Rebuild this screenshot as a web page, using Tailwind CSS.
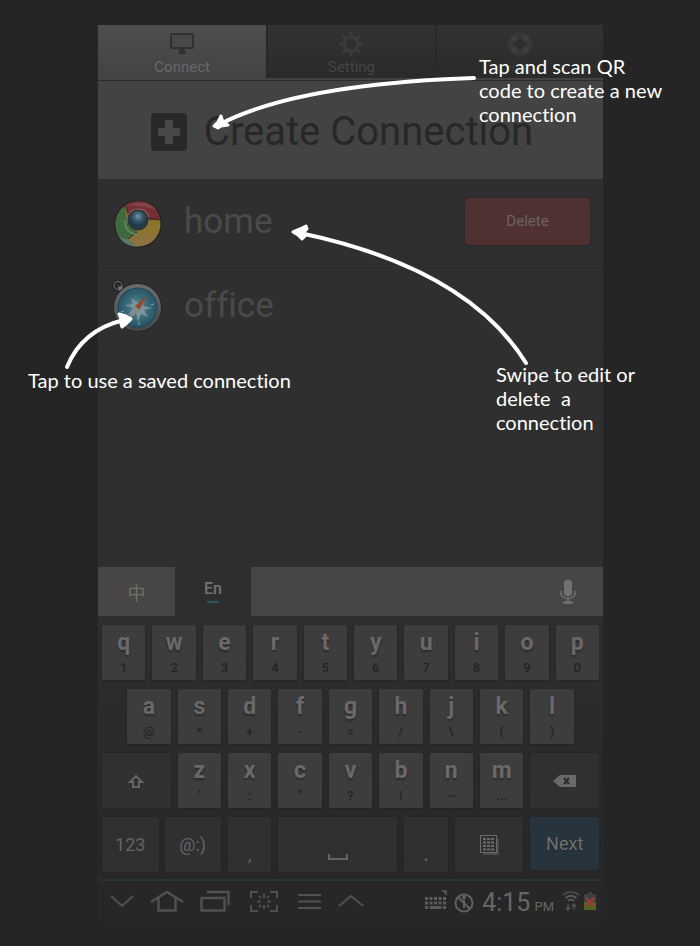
<!DOCTYPE html>
<html lang="en">
<head>
<meta charset="utf-8">
<meta name="viewport" content="width=device-width, initial-scale=1">
<title>Connections</title>
<script src="https://cdn.jsdelivr.net/npm/@tailwindcss/browser@4"></script>
</head>
<body class="relative min-h-screen bg-[#252525] font-['Roboto','Noto_Sans_CJK_SC',sans-serif] [font-variant-ligatures:none]">
<main class="pl-[98px] pr-[97px] pt-[25px]">
  <nav class="grid grid-cols-3 border-b-2 border-[#424242] text-[15px] leading-4" aria-label="Main">
    <a href="#connect" class="flex h-[53px] flex-col items-center gap-[3px] bg-linear-to-b from-[#4e4e4e] to-[#434343] pt-[7px] text-[#686868]">
      <svg class="h-6 w-6" viewBox="0 0 24 24" aria-hidden="true"><rect x="1" y="2" width="22" height="14" rx="1" fill="#484848" stroke="#303030" stroke-width="2"/><path d="M10 17h4l2 5H8z" fill="#303030"/></svg>
      Connect
    </a>
    <a href="#setting" class="flex h-[53px] flex-col items-center gap-[3px] border-l-2 border-[#282828] bg-linear-to-b from-[#323232] to-[#2a2a2a] pt-[7px] text-[#444444]">
      <svg class="h-6 w-6" viewBox="0 0 24 24" fill="none" stroke="#3b3b3b" aria-hidden="true"><circle cx="12" cy="12" r="7" stroke-width="3.500"/><path d="M12 0v4M12 20v4M0 12h4M20 12h4M3.500 3.500l3 3M17.500 17.500l3 3M3.500 20.500l3-3M17.500 6.500l3-3" stroke-width="3.500"/></svg>
      Setting
    </a>
    <a href="#help" class="flex h-[53px] flex-col items-center gap-[3px] border-l-2 border-[#2b2b2b] bg-linear-to-b from-[#323232] to-[#2a2a2a] pt-[7px] text-[#383838]">
      <svg class="h-6 w-6" viewBox="0 0 24 24" fill="none" aria-hidden="true"><circle cx="12" cy="12" r="9" stroke="#373737" stroke-width="6"/><path d="M4.500 4.500l4 4M15.500 15.500l4 4M4.500 19.500l4-4M15.500 8.500l4-4" stroke="#3e3e3e" stroke-width="5"/></svg>
      Help
    </a>
  </nav>

  <button type="button" class="flex h-[99px] w-full items-center justify-center gap-[17px] border-t border-[#2b2b2b] bg-[#434343] pl-[9px] pr-[26px] pt-1 text-[40px] leading-none text-[#272727]">
    <svg class="h-[38px] w-9 shrink-0" viewBox="0 0 36 38" aria-hidden="true"><rect width="36" height="38" rx="4" fill="#292929"/><path d="M15 7h6a1 1 0 0 1 1 1v7h6a1 1 0 0 1 1 1v6a1 1 0 0 1-1 1h-6v7a1 1 0 0 1-1 1h-6a1 1 0 0 1-1-1v-7H8a1 1 0 0 1-1-1v-6a1 1 0 0 1 1-1h6V8a1 1 0 0 1 1-1z" fill="#484848"/></svg>
    <span class="whitespace-nowrap">Create Connection</span>
  </button>

  <ul class="min-h-[388px] bg-[#2f2f2f] text-[35px] leading-none text-[#4a4a4a]">
    <li class="flex h-[86px] items-center border-b border-[#2a2a2a] pl-4 pr-[13px]">
      <svg class="mt-1 h-[52px] w-12 shrink-0" viewBox="0 0 48 52" aria-hidden="true">
        <defs><radialGradient id="ball" cx=".5" cy=".3"><stop stop-color="#7d959f"/><stop offset=".45" stop-color="#3b5f73"/><stop offset="1" stop-color="#213846"/></radialGradient>
        <linearGradient id="gold" x1="0" y1="0" x2="0" y2="1"><stop stop-color="#7d7523"/><stop offset=".65" stop-color="#8d7430"/><stop offset="1" stop-color="#8f7048"/></linearGradient></defs>
        <circle cx="24" cy="26" r="24" fill="#252525"/>
        <circle cx="24" cy="26" r="22.500" fill="url(#gold)"/>
        <path d="M11 8C4 13 0 23 2.500 33c3 9 11 15.500 21.500 15.500-4-2-8-4-10-8l9-7-10-9z" fill="#3d6a40"/>
        <path d="M24 48.500C14 49 6 43 3 35c3 5 7 7 11 6 2 4 6 6 10 7.500z" fill="#5c7b66"/>
        <path d="M11 8C21 0 42 1 46 22H26l-11 4c-1-7-1-12-4-18z" fill="#762f34"/>
        <path d="M13 8C21 3 36 3 42 12 32 8 23 7 13 8z" fill="#824649"/>
        <path d="M11 8c3 5 4 9 4 13M46 22l-12-2M14 41l9-7" stroke="#2d2a24" fill="none"/>
        <path d="M14 17c5-8 18-8 21 2" fill="none" stroke="#8f5a5d" stroke-width="1.500"/>
        <path d="M11 22c-1 9 5 14 12 14" fill="none" stroke="#66885f" stroke-width="1.500"/>
        <circle cx="24" cy="22" r="10.500" fill="#303637"/><circle cx="24" cy="22" r="9" fill="url(#ball)"/>
      </svg>
      <span class="ml-[22px] grow">home</span>
      <button type="button" class="h-[47px] w-[125px] rounded bg-[#4f3131] text-[15px] text-[#6b6464] shadow-[0_0_2px_#222]">Delete</button>
    </li>
    <li class="flex h-[82px] items-center border-b border-[#2a2a2a] pl-[14px] pr-[13px]">
      <svg class="h-[54px] w-[50px] shrink-0" viewBox="0 0 50 54" aria-hidden="true">
        <defs><linearGradient id="rim" x1="0" y1="0" x2="0" y2="1"><stop stop-color="#6b6c6e"/><stop offset="1" stop-color="#44484c"/></linearGradient>
        <radialGradient id="sea"><stop stop-color="#5d838d"/><stop offset=".6" stop-color="#376a79"/><stop offset="1" stop-color="#2a5768"/></radialGradient></defs>
        <circle cx="6" cy="6.500" r="4" fill="none" stroke="#202020" stroke-width="4"/><circle cx="6" cy="6.500" r="4" fill="none" stroke="#5b5d60" stroke-width="1.500"/><path d="M6 8l4-1 2 6-3 3z" fill="#77797c"/>
        <circle cx="25.500" cy="28.500" r="24.500" fill="#262728"/><circle cx="25.500" cy="28.500" r="23.500" fill="url(#rim)"/><circle cx="25.500" cy="28.500" r="20" fill="#244653"/><circle cx="25.500" cy="28.500" r="19" fill="url(#sea)"/>
        <path d="M22 15l4 9 7-3-2 6 9 2-8 2 4 7-7-3-3 8-2-9-8 2 5-7-8-3 8-1-2-6 6 4z" fill="#79949a"/>
        <path d="M36 16L23 27l4 4z" fill="#94472a"/><path d="M23 27l4 4-13 14z" fill="#858989"/>
        <path d="M27 43v3M39 26l3-1M9 33l3-1" stroke="#8ba4a9"/>
      </svg>
      <span class="ml-[22px] grow">office</span>
    </li>
  </ul>

  <section aria-label="Keyboard">
    <div class="flex h-[49px] bg-[#474644]">
      <button type="button" class="w-[77px] pt-1 text-lg text-[#70706d]">中</button>
      <button type="button" class="flex w-[76px] flex-col items-center gap-[3px] bg-[#2e2e2e] pt-[13px] text-base font-medium leading-[18px] text-[#737373]">En<span class="h-[2px] w-3 bg-[#315464]"></span></button>
      <input aria-label="Suggestion" class="min-w-0 grow bg-transparent" type="text">
      <button type="button" aria-label="Voice input" class="my-3 flex w-[71px] shrink-0 items-center justify-center border-l border-[#434240]">
        <svg class="h-6 w-4" viewBox="0 0 16 24"><rect x="4" y="0" width="8" height="16" rx="3" fill="#72716f"/><path d="M1 11v2c0 7 14 7 14 0v-2M8 18v4" fill="none" stroke="#72716f" stroke-width="1.500"/><ellipse cx="8" cy="22.500" rx="5.500" ry="1.500" fill="#72716f"/></svg>
      </button>
    </div>
    <div id="keys" class="grid grid-cols-20 gap-x-[7px] gap-y-[9px] border-b-2 border-[#2a3236] bg-linear-to-b from-[#2e2e2e] to-[#272727] px-1 pb-[7px] pt-[9px]"></div>
  </section>

  <footer class="flex h-10 items-center bg-[#272727] pl-3 pr-[7px] text-[#505050]">
    <div class="flex grow items-center">
      <button type="button" aria-label="Hide keyboard"><svg class="h-6 w-6" viewBox="0 0 24 24" fill="none" stroke="currentColor" stroke-width="2"><path d="M1 7l11 10L23 7"/></svg></button>
      <button type="button" aria-label="Home" class="ml-4"><svg class="h-6 w-[34px]" viewBox="0 0 34 24" fill="none" stroke="currentColor" stroke-width="2.500"><path d="M1 13L17 3l16 10M8.500 9v12.500h17V9"/></svg></button>
      <button type="button" aria-label="Recent apps" class="ml-4"><svg class="h-6 w-[30px]" viewBox="0 0 30 24" fill="none" stroke="currentColor" stroke-width="2.500"><path d="M1.500 9h23v12.500h-23zM7 3h21.500v13"/></svg></button>
      <button type="button" aria-label="Capture" class="ml-5"><svg class="h-6 w-7" viewBox="0 0 28 24" fill="none" stroke="currentColor" stroke-width="2"><path d="M1 9V3h7M20 3h7v6M27 16v6h-7M8 22H1v-6M14 5v4M14 16v4M7 12.500h4M17 12.500h4M9 7l2 2M19 7l-2 2M9 18l2-2M19 18l-2-2"/></svg></button>
      <button type="button" aria-label="Menu" class="ml-5"><svg class="h-6 w-6" viewBox="0 0 24 24" stroke="currentColor" stroke-width="2"><path d="M0 6h23M0 12.500h23M0 19h23"/></svg></button>
      <button type="button" aria-label="Expand" class="ml-4"><svg class="h-6 w-[26px]" viewBox="0 0 26 24" fill="none" stroke="currentColor" stroke-width="2"><path d="M1 17L13 7l12 10"/></svg></button>
    </div>
    <svg class="h-6 w-[23px]" viewBox="0 0 23 24" fill="#5c5c5c" aria-hidden="true"><path d="M0 8h3v3H0zM4.500 8h3v3h-3zM9 8h3v3H9zM13.500 8h3v3h-3zM18 8h3v3h-3zM0 12.500h3v3H0zM4.500 12.500h3v3h-3zM9 12.500h3v3H9zM13.500 12.500h3v3h-3zM18 12.500h3v3h-3zM0 17h3v3H0zM4.500 17h12v3h-12zM18 17h3v3h-3z"/><path d="M16 1h6v6z" fill="#505050"/></svg>
    <svg class="ml-[6px] h-6 w-5" viewBox="0 0 20 24" fill="none" stroke="#606060" stroke-width="2" aria-hidden="true"><circle cx="10" cy="14" r="8.500"/><path d="M4 8l12 12M8 12h2v7M10 12v7"/><circle cx="10" cy="8.500" r="1" fill="#606060"/></svg>
    <span class="ml-2 flex items-baseline gap-1 pt-[3px] leading-none text-[#666]"><span class="text-[25px]">4:15</span><span class="text-[13px]">PM</span></span>
    <svg class="ml-2 h-6 w-[18px]" viewBox="0 0 18 24" fill="none" stroke="#5b5b5b" stroke-width="2" aria-hidden="true"><path d="M1 6c4-4 12-4 16 0" stroke="#484848"/><path d="M3.500 9c3-3 8-3 11 0M6 12c2-2 4-2 6 0"/><path d="M6 21v-6M4 18.500l2 2.500 2-2.500M12 15v6M10 17.500l2-2.500 2 2.500" stroke="#505050" stroke-width="1.500"/></svg>
    <svg class="ml-1 h-6 w-3" viewBox="0 0 12 24" aria-hidden="true"><path d="M4 3h4v2h4v8H0V5h4z" fill="#404040"/><path d="M0 13h12v8H0z" fill="#536323"/><path d="M2 9l8 8M10 9l-8 8" stroke="#963d36" stroke-width="2.500"/></svg>
  </footer>
</main>

<svg class="pointer-events-none absolute left-0 top-0 h-[440px] w-[700px]" viewBox="0 0 700 440" fill="none" stroke="#fff" stroke-width="4" stroke-linecap="round" stroke-linejoin="round" aria-hidden="true">
  <path d="M474 78Q300 84 222 123"/><path d="M214 126l4-4 3-6 2 6 5 3-7 1-3 2z" fill="#fff" stroke-width="3"/>
  <path d="M526 363Q467 268 300 233"/><path d="M293 232l7-3 6-3 1 3-3 3 1 4-3 3-4-4z" fill="#fff" stroke-width="3"/>
  <path d="M67 367Q82 330 124 320"/><path d="M131 319l-5-3-7-2 2 5v5l1 3 5-4z" fill="#fff" stroke-width="3"/>
</svg>
<p class="absolute left-[479px] top-[54px] w-[200px] font-['Lato',sans-serif] text-xl leading-6 text-white">Tap and scan QR<br>code to create a new<br>connection</p>
<p class="absolute left-[496px] top-[362px] w-[150px] font-['Lato',sans-serif] text-xl leading-6 text-white">Swipe to edit or<br>delete&nbsp; a<br>connection</p>
<p class="absolute left-[28px] top-[368px] whitespace-nowrap font-['Lato',sans-serif] text-xl leading-6 text-white">Tap to use a saved connection</p>

<script>
const letter = ([main, alt], first) => `<button type="button" class="${first ? 'col-start-2 ' : ''}col-span-2 flex h-[55px] flex-col items-center rounded-xs bg-[#3d3d3d] pt-[5px] text-[#696969] shadow-[0_1px_2px_#222]"><span class="text-[23px] font-bold leading-[26px] text-shadow-[0_2px_2px_#2a2a2a]">${main}</span><span class="pt-[2px] text-[13px] font-medium leading-5 text-[#242424]">${alt}</span></button>`;
const special = (span, label, content) => `<button type="button" aria-label="${label}" class="${span} flex h-[55px] items-center justify-center rounded-xs bg-[#303030] text-lg text-[#646464] shadow-[0_0_2px_#222]">${content}</button>`;
const row = (letters, alts) => alts.map((a, i) => [letters[i], a]);
document.getElementById('keys').innerHTML = [
  ...row('qwertyuiop', [...'1234567890']).map(k => letter(k)),
  ...row('asdfghjkl', [...'@*+-=/\\()']).map((k, i) => letter(k, i === 0)),
  special('col-start-1 col-span-3', 'Shift', '<svg class="h-4 w-4" viewBox="0 0 16 16" fill="none" stroke="currentColor" stroke-width="2"><path d="M8 3l6 6h-3v5H5V9H2z"/></svg>'),
  ...row('zxcvbnm', ["'", ':', '"', '?', '!', '~', '...']).map(k => letter(k)),
  special('col-span-3', 'Backspace', '<svg class="h-3 w-[23px]" viewBox="0 0 23 12"><path d="M7 0h16v12H7L0 6z" fill="#696969"/><path d="M11 3l5 6M16 3l-5 6" stroke="#2b2b2b" stroke-width="2"/></svg>'),
  '<div class="col-span-5 grid grid-cols-2 gap-[6px]">', special('col-span-1', 'Numbers', '123'), special('col-span-1', 'Symbols', '@:)'), '</div>',
  special('col-span-2', 'Comma', '<span class="pt-5">,</span>'),
  special('col-span-5', 'Space', '<svg class="mt-6 h-[6px] w-5" viewBox="0 0 20 6" fill="none" stroke="currentColor" stroke-width="2"><path d="M1 0v5h18V0"/></svg>'),
  special('col-span-2', 'Period', '<span class="pt-5 font-bold">.</span>'),
  special('col-span-3', 'Clipboard', '<svg class="h-5 w-[19px]" viewBox="0 0 19 20" fill="none" stroke="#6a6a6a"><path d="M3 19h15V4" stroke="#4a4a4a" stroke-width="2"/><rect x=".5" y=".5" width="16" height="17" fill="#303030"/><path d="M3 4h11M3 7.500h11M3 11h11M3 14.500h11" stroke-width="2" stroke-dasharray="3 1"/></svg>'),
  '<button type="button" class="col-span-3 h-[53px] rounded-xs bg-[#27343d] text-lg text-[#707070] shadow-[0_0_2px_#222] text-shadow-[0_1px_1px_#222]">Next</button>'
].join('');
</script>
</body>
</html>
